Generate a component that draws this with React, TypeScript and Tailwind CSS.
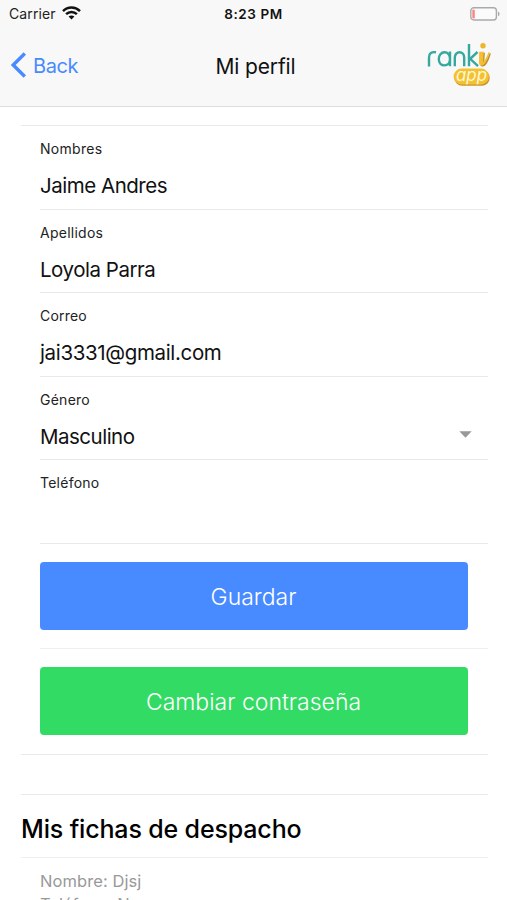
import React from "react";

type FieldProps = {
  label: string;
  value?: string;
  height: string;
  labelTracking: string;
  valueTracking?: string;
  select?: boolean;
};

function Field({ label, value, height, labelTracking, valueTracking = "", select }: FieldProps) {
  return (
    <div className={`ml-[19px] flex flex-col border-b border-[#e9e9e9] pt-[13px] ${height}`}>
      <span className={`text-[14px] leading-5 text-[#222] ${labelTracking}`}>{label}</span>
      <div className="mt-[15px] flex h-6 items-center justify-between pr-4">
        <span className={`text-[20.5px] leading-6 text-[#111] ${valueTracking}`}>{value}</span>
        {select && (
          <svg width="13" height="7" viewBox="0 0 13 7" className="mb-1.5">
            <path d="M0.3 0.3h12.4L6.5 6.7z" fill="#999" />
          </svg>
        )}
      </div>
    </div>
  );
}

function Wifi() {
  return (
    <svg width="19" height="14" viewBox="0 0 19 14" fill="none" stroke="#111" strokeWidth="2.5" className="-mt-px">
      <path d="M1 5.1C5.8 0.4 13.2 0.4 18 5.1" />
      <path d="M4.1 8.2c3.1-3 7.7-3 10.8 0" />
      <path d="M6.6 10.6c1.7-1.5 4.1-1.5 5.8 0L9.5 13.5z" fill="#111" stroke="none" />
    </svg>
  );
}

function Battery() {
  return (
    <svg width="30" height="14" viewBox="0 0 30 14">
      <rect x="0.8" y="0.8" width="25.6" height="12.2" rx="3" fill="#fbfbfb" stroke="#aaa" strokeWidth="1.4" />
      <rect x="2.3" y="2.4" width="2.5" height="9" rx="1" fill="#ff8585" />
      <path d="M28 4.6c2 .8 2 3.9 0 4.7z" fill="#aaa" />
    </svg>
  );
}

function Logo() {
  return (
    <svg width="64" height="46" viewBox="0 0 64 46" fill="none">
      <g stroke="#35a99d" strokeWidth="2.4">
        <path d="M2 24.5V15.5C2 11 4.5 9.7 9 10.2" />
        <path d="M23 9.5V24.2M23 17c0-4-2.4-6.8-5.6-6.8S11.8 13.2 11.8 17s2.3 6.4 5.6 6.4S23 21 23 17" />
        <path d="M27.8 24.2V15.8c0-7.4 9.4-7.4 9.4 0V24.2" />
        <path d="M42 2v22.2M50.5 10L43.2 16.8 51 24.2" />
      </g>
      <circle cx="56" cy="3.8" r="2.7" fill="#eeb52d" />
      <path
        d="M52.6 10.2h4.6l-.7 9.3c-.2 2.8 3.4-3.2 5.6-9l1 .4c-1.7 6.6-4.7 13-8.2 13-2.4 0-2.7-1.8-2.5-4z"
        fill="#b98b2d"
        transform="translate(.7 .6)"
      />
      <path
        d="M52.2 9.8h4.6l-.7 9.3c-.2 2.8 3.4-3.2 5.6-9l1 .4c-1.7 6.6-4.7 13-8.2 13-2.4 0-2.7-1.8-2.5-4z"
        fill="#f4bd32"
      />
      <rect x="27.4" y="28" width="35.3" height="15.8" rx="7.9" fill="#c9952f" />
      <rect x="26.6" y="26.6" width="35.3" height="15.8" rx="7.9" fill="#f4c12f" />
      <text
        x="29"
        y="38.6"
        fontSize="17"
        fontStyle="italic"
        fontFamily="Inter, sans-serif"
        textLength="31"
        lengthAdjust="spacingAndGlyphs"
        fill="#fff7d6"
      >
        app
      </text>
    </svg>
  );
}

export default function App() {
  return (
    <div className="h-[900px] w-[507px] overflow-hidden bg-white font-['Inter','Liberation_Sans',sans-serif]">
      <header className="flex h-[107px] flex-col border-b border-[#dedede] bg-[#f8f8f8]">
        <div className="grid h-[27px] grid-cols-[1fr_auto_1fr] items-center pl-[9px] pr-[7px]">
          <div className="flex items-center gap-[6px]">
            <span className="text-[14px] leading-5 tracking-[0.1px] text-[#222]">Carrier</span>
            <Wifi />
          </div>
          <span className="pr-[2px] text-[13.5px] font-semibold leading-5 tracking-[0.6px] text-[#111]">8:23 PM</span>
          <div className="flex justify-end">
            <Battery />
          </div>
        </div>
        <div className="grid h-[79px] grid-cols-[1fr_auto_1fr] items-center pl-[11px] pr-[16px]">
          <div className="flex items-center gap-[6px] text-[#488aff]">
            <svg width="16" height="26" viewBox="0 0 16 26" fill="none" className="-mt-[3px]">
              <path d="M13.8 1.5L2.2 13l11.6 11.5" stroke="#488aff" strokeWidth="3.4" />
            </svg>
            <span className="pb-px text-[20px] leading-6 tracking-[-0.4px]">Back</span>
          </div>
          <h1 className="pl-[9px] text-[21px] leading-6 tracking-[-0.15px] text-[#111]">Mi perfil</h1>
          <div className="flex justify-end pb-[3px]">
            <Logo />
          </div>
        </div>
      </header>

      <main className="pl-[21px] pr-[19px] pt-[18px]">
        <form className="border-y border-[#e9e9e9]">
          <Field label="Nombres" value="Jaime Andres" height="h-[84px]" labelTracking="tracking-[0.3px]" valueTracking="tracking-[-0.48px]" />
          <Field label="Apellidos" value="Loyola Parra" height="h-[83px]" labelTracking="tracking-[0.25px]" valueTracking="tracking-[-0.48px]" />
          <Field label="Correo" value="jai3331@gmail.com" height="h-[84px]" labelTracking="tracking-[0.2px]" valueTracking="tracking-[-0.35px]" />
          <Field label="Género" value="Masculino" height="h-[83px]" labelTracking="tracking-[0.25px]" valueTracking="tracking-[-0.5px]" select />
          <Field label="Teléfono" height="h-[84px]" labelTracking="tracking-[0.25px]" />
          <div className="ml-[19px] h-[105px] border-b border-[#efefef] pr-5 pt-[18px]">
            <button type="button" className="h-[68px] w-full rounded bg-[#488aff] pr-px pt-[2px] text-[23px] font-light text-white">
              Guardar
            </button>
          </div>
          <div className="ml-[19px] h-[105px] pr-5 pt-[18px]">
            <button type="button" className="h-[68px] w-full rounded bg-[#32db64] pr-px pt-[2px] text-[23px] font-light text-white">
              Cambiar contraseña
            </button>
          </div>
        </form>

        <section className="mt-[39px] border-t border-[#e9e9e9]">
          <h2 className="h-[63px] border-b border-[#efefef] pt-[18px] text-[25px] font-medium leading-8 tracking-[-0.15px] text-black">
            Mis fichas de despacho
          </h2>
          <div className="ml-[19px] pt-[12px] text-[16.5px] leading-[23px] text-[#999]">
            <p className="tracking-[0.08px]">Nombre: Djsj</p>
            <p>Teléfono: Ns</p>
          </div>
        </section>
      </main>
    </div>
  );
}
